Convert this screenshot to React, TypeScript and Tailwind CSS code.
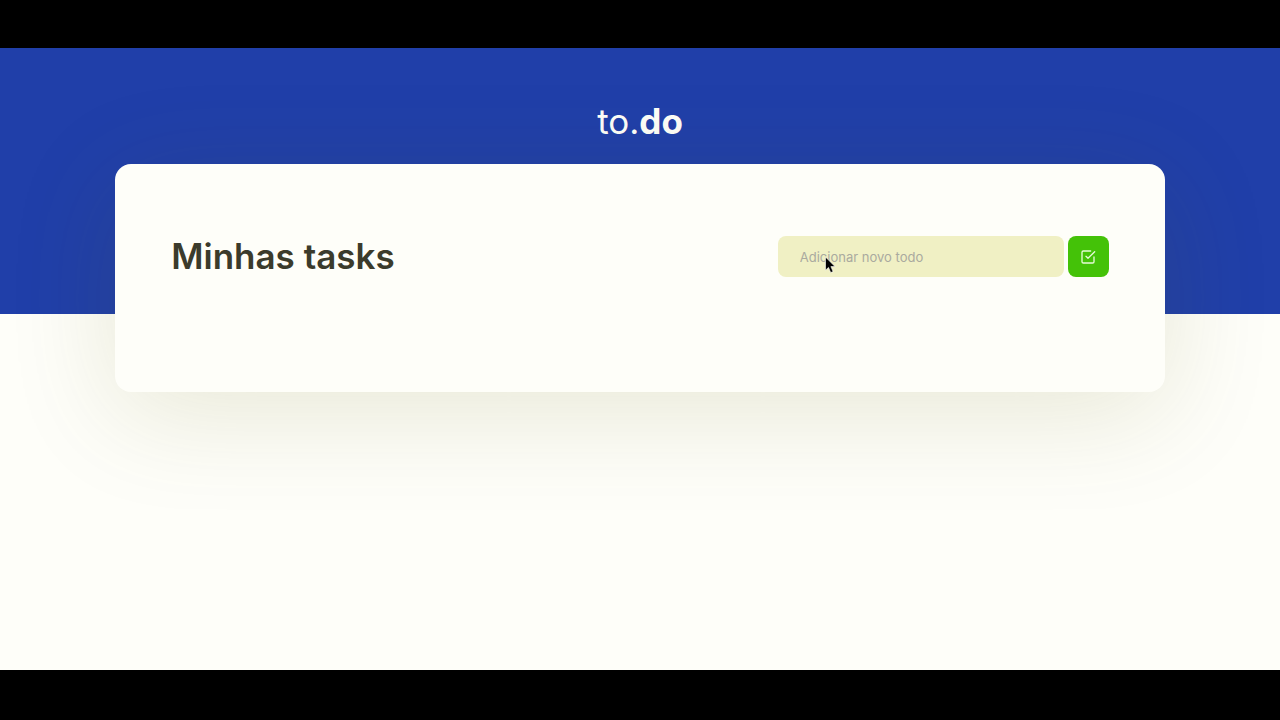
import { useState } from "react";
import type { FormEvent } from "react";
import { FiCheckSquare } from "react-icons/fi";

function Header() {
  return (
    <header className="flex h-[266px] justify-center bg-[#203fa9] pt-[49px] text-[#fdfdf8]">
      <h1 className="h-12 text-[35px] leading-12 font-normal">
        to.<strong className="font-bold">do</strong>
      </h1>
    </header>
  );
}

function Pointer() {
  return (
    <svg
      className="pointer-events-none absolute top-5 left-[46px] h-[18px] w-3"
      viewBox="0 0 12 18"
      aria-hidden="true"
    >
      <path
        d="M1.5 1v13.2l3-2.8 2.2 5.2 2.4-1-2.2-5h4.1z"
        fill="#000"
        stroke="#fff"
        strokeWidth="0.6"
      />
    </svg>
  );
}

function TaskList() {
  const [title, setTitle] = useState("");
  const [tasks, setTasks] = useState<string[]>([]);

  function addTask(event: FormEvent) {
    event.preventDefault();
    if (!title.trim()) return;
    setTasks([...tasks, title]);
    setTitle("");
  }

  return (
    <section className="relative mx-auto -mt-[150px] min-h-[228px] w-[82%] rounded-2xl bg-[#fefef9] px-14 py-[72px] shadow-[0_20px_110px_rgba(90,90,0,0.14)]">
      <div className="flex items-start justify-between gap-4">
        <h2 className="text-[35px] leading-10 font-semibold text-[#3b3b2c]">
          Minhas tasks
        </h2>
        <form className="flex gap-1" onSubmit={addTask}>
          <div className="relative">
            <input
              className="h-[41px] w-[286px] rounded-lg bg-[#f0f0c4] px-[22px] text-[13px] text-[#3b3b2c] outline-none placeholder:text-[#aaaa9f]"
              type="text"
              aria-label="Adicionar novo todo"
              placeholder="Adicionar novo todo"
              value={title}
              onChange={(event) => setTitle(event.target.value)}
            />
            <Pointer />
          </div>
          <button
            className="flex size-[41px] items-center justify-center rounded-lg bg-[#44c208] text-[#e6fbd8]"
            type="submit"
            aria-label="Adicionar"
          >
            <FiCheckSquare className="size-4" />
          </button>
        </form>
      </div>
      {tasks.length > 0 && (
        <ul className="mt-8 flex flex-col gap-3 text-[#3b3b2c]">
          {tasks.map((task, index) => (
            <li key={index}>{task}</li>
          ))}
        </ul>
      )}
    </section>
  );
}

export default function App() {
  return (
    <div className="flex min-h-screen flex-col bg-black pt-12 pb-[50px] font-['Inter',sans-serif]">
      <main className="flex-1 overflow-hidden bg-[#fefef9]">
        <Header />
        <TaskList />
      </main>
    </div>
  );
}
